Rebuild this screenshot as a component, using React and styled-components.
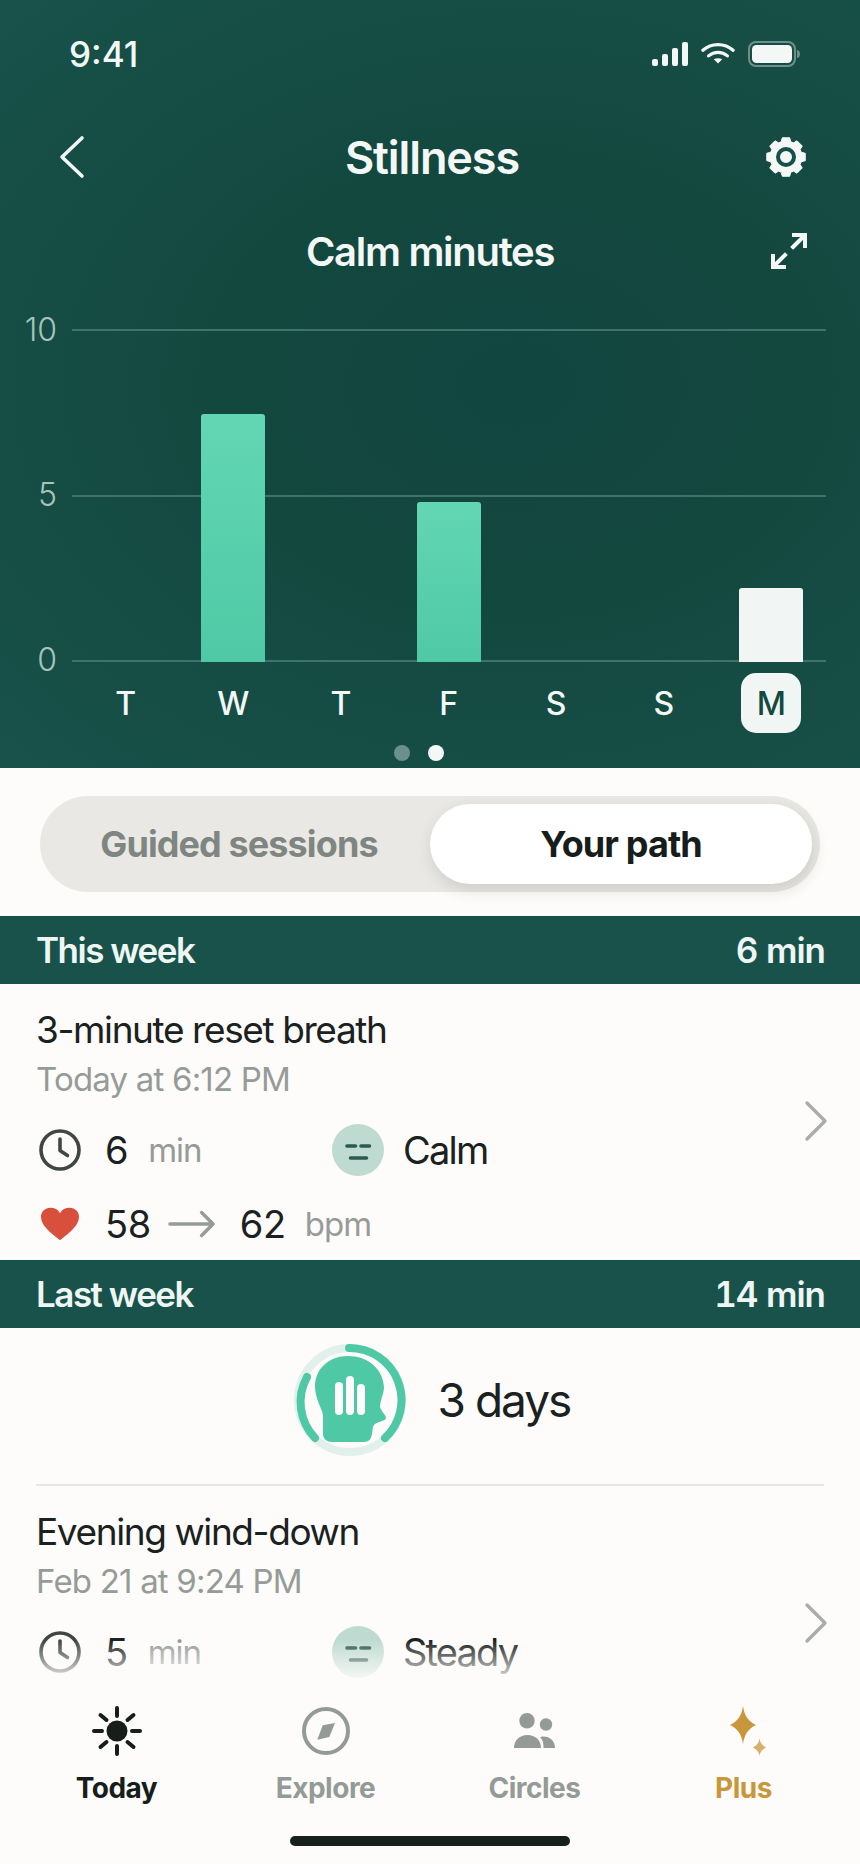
import React from 'react';
import styled, { createGlobalStyle } from 'styled-components';

const GlobalStyle = createGlobalStyle`
  html, body {
    margin: 0;
    padding: 0;
    background: #fdfcfa;
    font-family: Inter, "Liberation Sans", sans-serif;
  }
`;

const Phone = styled.div`
  position: relative;
  display: flex;
  flex-direction: column;
  width: 860px;
  height: 1864px;
  overflow: hidden;
  background: #fdfcfa;
`;

const Hero = styled.header`
  display: flex;
  flex-direction: column;
  flex: none;
  height: 768px;
  background: radial-gradient(ellipse at 60% 50%, #114540 0%, #13483f 40%, #18524a 100%);
  color: #f3f8f6;
`;

const StatusBar = styled.div`
  display: flex;
  align-items: center;
  justify-content: space-between;
  height: 36px;
  margin-top: 36px;
  padding: 0 60px 0 69px;
`;

const Clock = styled.span`
  font-size: 35px;
  font-weight: 500;
`;

const StatusIcons = styled.div`
  display: flex;
  align-items: center;
  gap: 13px;
`;

const NavRow = styled.div`
  display: grid;
  grid-template-columns: 1fr auto 1fr;
  align-items: center;
  height: 60px;
  margin-top: 55px;
  padding: 0 54px 0 58px;

  & > svg:last-child {
    justify-self: end;
  }
`;

const Title = styled.h1`
  margin: 0;
  font-size: 45px;
  font-weight: 600;
  letter-spacing: -1.1px;
`;

const ChartHead = styled.div`
  display: flex;
  align-items: center;
  justify-content: center;
  position: relative;
  height: 50px;
  margin-top: 39px;
`;

const ChartTitle = styled.h2`
  margin: 0;
  font-size: 40px;
  font-weight: 600;
  letter-spacing: -1.3px;
`;

const ExpandButton = styled.span`
  position: absolute;
  right: 52px;
  top: 6px;
  display: flex;
`;

const ChartGrid = styled.div`
  display: grid;
  grid-template-columns: 72px 754px;
  height: 332px;
  margin-top: 53px;
`;

const YAxis = styled.div`
  display: flex;
  flex-direction: column;
  justify-content: space-between;
  align-items: flex-end;
  padding-right: 15px;
  margin: -16px 0;
`;

const YLabel = styled.span`
  font-size: 32px;
  line-height: 34px;
  font-weight: 300;
  color: #a5c4bc;
`;

const Plot = styled.div`
  position: relative;
  display: grid;
  grid-template-columns: repeat(7, 107.6px);
`;

const GridLine = styled.div`
  position: absolute;
  left: 0;
  right: 0;
  top: ${({ $top }) => $top}px;
  height: 2px;
  background: #40716a;
`;

const BarSlot = styled.div`
  position: relative;
  display: flex;
  align-items: flex-end;
  justify-content: center;
  margin-bottom: -1px;
`;

const Bar = styled.div`
  width: 64px;
  border-radius: 3px 3px 0 0;
  background: ${({ $today }) =>
    $today ? '#f1f6f5' : 'linear-gradient(180deg, #63d6b3 0%, #4fc9a5 100%)'};
`;

const DayRow = styled.div`
  display: grid;
  grid-template-columns: repeat(7, 107.6px);
  margin: 12px 0 0 72px;
`;

const Day = styled.div`
  display: flex;
  align-items: center;
  justify-content: center;
  width: 60px;
  height: 60px;
  justify-self: center;
  border-radius: 15px;
  font-size: 32px;
  font-weight: 500;
  background: ${({ $active }) => ($active ? '#f1f6f5' : 'transparent')};
  color: ${({ $active }) => ($active ? '#14493f' : '#f3f8f6')};
`;

const Dots = styled.div`
  display: flex;
  justify-content: center;
  gap: 18px;
  margin-top: 12px;
  padding-right: 22px;
`;

const Dot = styled.span`
  width: 16px;
  height: 16px;
  border-radius: 50%;
  background: ${({ $on }) => ($on ? '#f3f8f6' : '#6b8f8a')};
`;

const Segmented = styled.div`
  display: grid;
  grid-template-columns: 390px 382px;
  flex: none;
  height: 96px;
  margin: 28px 40px 24px;
  padding: 8px 8px 8px 0;
  box-sizing: border-box;
  border-radius: 48px;
  background: #e9e8e5;
`;

const SegmentButton = styled.div`
  display: flex;
  align-items: center;
  justify-content: center;
  padding-left: ${({ $active }) => ($active ? '0' : '8px')};
  border-radius: 40px;
  font-size: 36px;
  font-weight: 700;
  letter-spacing: -0.9px;
  color: ${({ $active }) => ($active ? '#161d1a' : '#7f8681')};
  background: ${({ $active }) => ($active ? '#ffffff' : 'transparent')};
  box-shadow: ${({ $active }) => ($active ? '2px 6px 16px rgba(40, 40, 30, 0.14)' : 'none')};
`;

const SectionBand = styled.div`
  display: flex;
  flex: none;
  align-items: center;
  justify-content: space-between;
  height: 68px;
  padding: 0 35px 0 36px;
  background: #18524a;
  color: #eef6f3;
  font-size: 35px;
  font-weight: 600;
  letter-spacing: -1.5px;
`;

const BandTotal = styled.span`
  letter-spacing: -1px;
  font-variant-numeric: tabular-nums;
`;

const Session = styled.div`
  display: grid;
  grid-template-columns: 1fr auto;
  flex: none;
  box-sizing: border-box;
  height: 276px;
  padding: 24px 32px 0 36px;
`;

const ChevronSlot = styled.div`
  align-self: center;
  margin-bottom: 23px;
`;

const SessionTitle = styled.div`
  font-size: 37px;
  line-height: 44px;
  letter-spacing: -1.4px;
  color: #1a211e;
`;

const SessionDate = styled.div`
  margin-top: 7px;
  font-size: 33px;
  line-height: 40px;
  letter-spacing: -0.8px;
  color: #969b97;
`;

const Stats = styled.div`
  display: grid;
  grid-template-columns: 295px auto;
  align-items: center;
  margin-top: 23px;
  height: 56px;
`;

const Stat = styled.div`
  display: flex;
  align-items: center;
  padding-left: 3px;
`;

const MoodStat = styled(Stat)`
  padding-left: 1px;
`;

const Value = styled.span`
  margin-left: ${({ $gap }) => $gap ?? 0}px;
  font-size: 38px;
  letter-spacing: ${({ $word }) => ($word ? '-1.8px' : '-0.4px')};
  color: #1a211e;
`;

const Unit = styled.span`
  margin-left: ${({ $gap }) => $gap ?? 20}px;
  font-size: 33px;
  letter-spacing: -1px;
  color: #969b97;
`;

const HeartRow = styled.div`
  display: flex;
  align-items: center;
  height: 50px;
  margin-top: 21px;
  padding-left: 5px;
`;

const FlowArrow = styled.svg`
  margin-left: 17px;
`;

const Streak = styled.div`
  display: flex;
  flex: none;
  align-items: center;
  justify-content: center;
  gap: 32px;
  height: 158px;
  box-sizing: border-box;
  padding: 0 0 12px 4px;
  border-bottom: 2px solid #e6e6e3;
  margin: 0 36px;
`;

const StreakText = styled.span`
  font-size: 46px;
  letter-spacing: -2px;
  color: #1a211e;
`;

const TabBar = styled.nav`
  position: absolute;
  left: 0;
  right: 0;
  bottom: 0;
  height: 224px;
  background: linear-gradient(180deg, rgba(253, 252, 250, 0) 0%, #fdfcfa 20%);
`;

const Tabs = styled.div`
  display: grid;
  grid-template-columns: repeat(4, 209px);
  justify-content: center;
  margin-top: 66px;
`;

const Tab = styled.div`
  display: flex;
  flex-direction: column;
  align-items: center;
  gap: 15px;
  font-size: 28px;
  font-weight: 700;
  letter-spacing: -0.5px;
  color: ${({ $color }) => $color};
`;

const TabIcon = styled.span`
  display: flex;
  align-items: center;
  justify-content: center;
  height: 50px;
  margin-left: ${({ $shift }) => $shift ?? 0}px;
`;

const HomeBar = styled.div`
  position: absolute;
  left: 290px;
  bottom: 18px;
  width: 280px;
  height: 10px;
  border-radius: 5px;
  background: #17201d;
`;

const ClockIcon = ({ color = '#3f4744' }) => (
  <svg width="42" height="42" viewBox="0 0 42 42" fill="none" stroke={color} strokeWidth="3.6" strokeLinecap="round" strokeLinejoin="round">
    <circle cx="21" cy="21" r="19" />
    <path d="M21 10v11.5l7.5 5" />
  </svg>
);

const Mood = () => (
  <svg width="52" height="52" viewBox="0 0 52 52">
    <circle cx="26" cy="26" r="26" fill="#bfdbd1" />
    <g stroke="#2d5a50" strokeWidth="3.6" strokeLinecap="round">
      <path d="M15 22h8.5M29 22h8.5M18.5 34h16" />
    </g>
  </svg>
);

const Chevron = () => (
  <svg width="24" height="42" viewBox="0 0 24 42" fill="none" stroke="#a9adaa" strokeWidth="3.4" strokeLinecap="round" strokeLinejoin="round">
    <path d="M3 3l18 18L3 39" />
  </svg>
);

const gearPath = () => {
  const pts = [];
  for (let i = 0; i < 8; i++) {
    const a = (i * Math.PI) / 4 - Math.PI / 2;
    [[a - 0.3, 16], [a - 0.19, 19.6], [a + 0.19, 19.6], [a + 0.3, 16]].forEach(([t, r]) => {
      pts.push(`${(20 + r * Math.cos(t)).toFixed(2)} ${(20 + r * Math.sin(t)).toFixed(2)}`);
    });
  }
  return `M${pts.join('L')}Z`;
};

const Gear = () => (
  <svg width="40" height="40" viewBox="0 0 40 40">
    <path d={gearPath()} fill="#f3f8f6" stroke="#f3f8f6" strokeWidth="1" strokeLinejoin="round" />
    <circle cx="20" cy="20" r="8" fill="none" stroke="#15504a" strokeWidth="4" />
  </svg>
);

const StreakIcon = () => (
  <svg width="112" height="112" viewBox="0 0 112 112" fill="none">
    <circle cx="56" cy="56" r="52" stroke="#e2f0ec" strokeWidth="8" />
    <path d="M55 4A52 52 0 0 1 91 94" stroke="#4fc9a5" strokeWidth="8" strokeLinecap="round" />
    <path d="M21 94A52 52 0 0 1 13 33" stroke="#4fc9a5" strokeWidth="8" strokeLinecap="round" />
    <path
      d="M54 12C74 12 89 25 90 43C90 50 86 56 86 63C87 67 92 71 92 74C92 77 82 78 80 81C78 84 79 86 78 90C77 95 75 98 70 98H38C33 98 29 95 29 90V72C29 66 21 56 21 42C21 25 35 12 54 12Z"
      fill="#4fc9a5"
    />
    <g stroke="#fdfcfa" strokeWidth="8" strokeLinecap="round">
      <path d="M45 42v25M56 36v31M67 44v23" />
    </g>
  </svg>
);

const days = [
  { d: 'T', h: 0 },
  { d: 'W', h: 248 },
  { d: 'T', h: 0 },
  { d: 'F', h: 160 },
  { d: 'S', h: 0 },
  { d: 'S', h: 0 },
  { d: 'M', h: 74, today: true },
];

export default function App() {
  return (
    <Phone>
      <GlobalStyle />
      <Hero>
        <StatusBar>
          <Clock>9:41</Clock>
          <StatusIcons>
            <svg width="36" height="24" viewBox="0 0 36 24" fill="#f3f8f6">
              <rect x="0" y="17" width="6" height="7" rx="2" />
              <rect x="10" y="12" width="6" height="12" rx="2" />
              <rect x="20" y="6" width="6" height="18" rx="2" />
              <rect x="30" y="0" width="6" height="24" rx="2" />
            </svg>
            <svg width="34" height="24" viewBox="0 0 36 24" fill="none" stroke="#f3f8f6" strokeWidth="3.4" strokeLinecap="round">
              <path d="M2 8c9-8 23-8 32 0" />
              <path d="M8 14c6-5 14-5 20 0" />
              <path d="M18 22l-4.5-4.5c2.5-1.5 6.5-1.5 9 0z" fill="#f3f8f6" stroke="none" />
            </svg>
            <svg width="52" height="26" viewBox="0 0 52 26" fill="none">
              <rect x="1" y="1" width="46" height="24" rx="7" stroke="#6d9089" strokeWidth="2" />
              <rect x="4" y="4" width="40" height="18" rx="4.5" fill="#f3f8f6" />
              <path d="M49 9c2 0 3 2 3 4s-1 4-3 4z" fill="#6d9089" />
            </svg>
          </StatusIcons>
        </StatusBar>
        <NavRow>
          <svg width="28" height="44" viewBox="0 0 28 44" fill="none" stroke="#f3f8f6" strokeWidth="3.6" strokeLinecap="round" strokeLinejoin="round">
            <path d="M24 3L4 22l20 19" />
          </svg>
          <Title>Stillness</Title>
          <Gear />
        </NavRow>
        <ChartHead>
          <ChartTitle>Calm minutes</ChartTitle>
          <ExpandButton>
            <svg width="38" height="38" viewBox="0 0 38 38" fill="none" stroke="#f3f8f6" strokeWidth="4" strokeLinecap="square">
              <path d="M24 3h11v11M34 4L23 15M3 24v11h11M4 34l11-11" />
            </svg>
          </ExpandButton>
        </ChartHead>
        <ChartGrid>
          <YAxis>
            <YLabel>10</YLabel>
            <YLabel>5</YLabel>
            <YLabel>0</YLabel>
          </YAxis>
          <Plot>
            <GridLine $top={0} />
            <GridLine $top={166} />
            <GridLine $top={331} />
            {days.map((item, i) => (
              <BarSlot key={i}>
                {item.h > 0 && <Bar $today={item.today} style={{ height: item.h }} />}
              </BarSlot>
            ))}
          </Plot>
        </ChartGrid>
        <DayRow>
          {days.map((item, i) => (
            <Day key={i} $active={item.today}>{item.d}</Day>
          ))}
        </DayRow>
        <Dots>
          <Dot />
          <Dot $on />
        </Dots>
      </Hero>

      <Segmented>
        <SegmentButton>Guided sessions</SegmentButton>
        <SegmentButton $active>Your path</SegmentButton>
      </Segmented>

      <SectionBand>
        <span>This week</span>
        <BandTotal>6 min</BandTotal>
      </SectionBand>
      <Session>
        <div>
          <SessionTitle>3-minute reset breath</SessionTitle>
          <SessionDate>Today at 6:12 PM</SessionDate>
          <Stats>
            <Stat>
              <ClockIcon />
              <Value $gap={24}>6</Value>
              <Unit>min</Unit>
            </Stat>
            <MoodStat>
              <Mood />
              <Value $gap={19} $word>Calm</Value>
            </MoodStat>
          </Stats>
          <HeartRow>
            <svg width="38" height="34" viewBox="0 0 42 36">
              <path d="M21 36C10 27 0 20 0 10 0 4 5 0 10 0c5 0 9 2 11 6 2-4 6-6 11-6 5 0 10 4 10 10 0 10-10 17-21 26z" fill="#d8503c" />
            </svg>
            <Value $gap={26}>58</Value>
            <FlowArrow width="48" height="30" viewBox="0 0 50 30" fill="none" stroke="#969b97" strokeWidth="3.6" strokeLinecap="round" strokeLinejoin="round">
              <path d="M2 15h45M35 3l12 12-12 12" />
            </FlowArrow>
            <Value $gap={24}>62</Value>
            <Unit $gap={19}>bpm</Unit>
          </HeartRow>
        </div>
        <ChevronSlot>
          <Chevron />
        </ChevronSlot>
      </Session>
      <SectionBand>
        <span>Last week</span>
        <BandTotal>14 min</BandTotal>
      </SectionBand>
      <Streak>
        <StreakIcon />
        <StreakText>3 days</StreakText>
      </Streak>
      <Session>
        <div>
          <SessionTitle>Evening wind-down</SessionTitle>
          <SessionDate>Feb 21 at 9:24 PM</SessionDate>
          <Stats>
            <Stat>
              <ClockIcon />
              <Value $gap={24}>5</Value>
              <Unit>min</Unit>
            </Stat>
            <MoodStat>
              <Mood />
              <Value $gap={19} $word>Steady</Value>
            </MoodStat>
          </Stats>
        </div>
        <ChevronSlot>
          <Chevron />
        </ChevronSlot>
      </Session>

      <TabBar>
        <Tabs>
          <Tab $color="#161d1a">
            <TabIcon>
              <svg width="50" height="50" viewBox="0 0 50 50" fill="#161d1a" stroke="#161d1a" strokeWidth="4" strokeLinecap="round">
                <circle cx="25" cy="25" r="10.5" stroke="none" />
                <path d="M25 2v8M25 40v8M2 25h8M40 25h8M8.5 9l6 5M41.5 9l-6 5M8.5 41l6-5M41.5 41l-6-5" />
              </svg>
            </TabIcon>
            Today
          </Tab>
          <Tab $color="#949a96">
            <TabIcon>
              <svg width="50" height="50" viewBox="0 0 50 50" fill="none">
                <circle cx="25" cy="25" r="22" stroke="#949a96" strokeWidth="4" />
                <path d="M34 17L28.3 31 16.3 33.7 21.7 19.3z" fill="#949a96" />
              </svg>
            </TabIcon>
            Explore
          </Tab>
          <Tab $color="#949a96">
            <TabIcon>
              <svg width="42" height="36" viewBox="0 0 42 36" fill="#949a96">
                <circle cx="13" cy="7.7" r="7.7" />
                <circle cx="32" cy="11.5" r="6.2" />
                <path d="M0 35C0 27 6 22 13.5 22S27 27 27 35z" />
                <path d="M28 23.5C36 23 41 28 41 35H29.5C29.5 30 29 26.5 26 24.5z" />
              </svg>
            </TabIcon>
            Circles
          </Tab>
          <Tab $color="#c9973b">
            <TabIcon $shift={9}>
              <svg width="36" height="50" viewBox="0 0 36 50">
                <path d="M13 0C14.5 10 18 15 26 19C18 23 14.5 28 13 38C11.5 28 8 23 0 19C8 15 11.5 10 13 0Z" fill="#c9973b" />
                <path d="M29.5 32C30 37 32 39 36 41.5C32 44 30 46 29.5 50C29 46 27 44 23 41.5C27 39 29 37 29.5 32Z" fill="#d7b06c" />
              </svg>
            </TabIcon>
            Plus
          </Tab>
        </Tabs>
        <HomeBar />
      </TabBar>
    </Phone>
  );
}
